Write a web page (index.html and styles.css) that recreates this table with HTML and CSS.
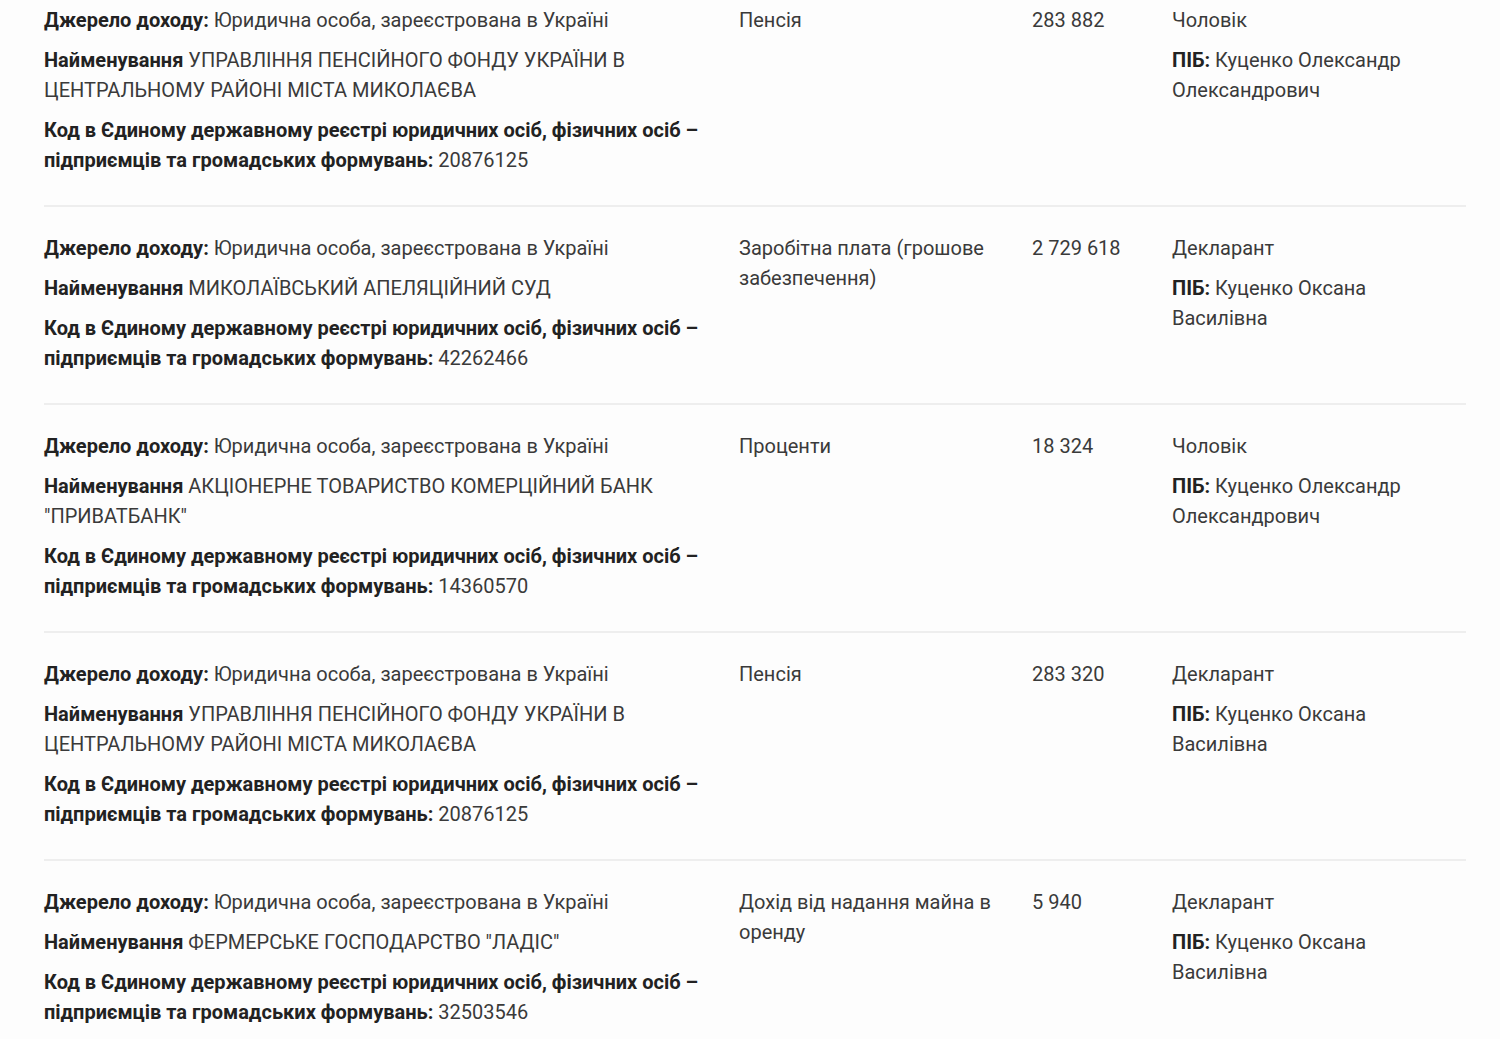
FILE: index.html
```html
<!DOCTYPE html>
<html lang="uk">
<head>
<meta charset="utf-8">
<link rel="stylesheet" href="styles.css">
</head>
<body>
<div class="list">
  <div class="row">
    <div class="cell c1">
      <p><b>Джерело доходу:</b> Юридична особа, зареєстрована в Україні</p>
      <p><b>Найменування</b> УПРАВЛІННЯ ПЕНСІЙНОГО ФОНДУ УКРАЇНИ В ЦЕНТРАЛЬНОМУ РАЙОНІ МІСТА МИКОЛАЄВА</p>
      <p><b>Код в Єдиному державному реєстрі юридичних осіб, фізичних осіб – підприємців та громадських формувань:</b> 20876125</p>
    </div>
    <div class="cell c2"><p>Пенсія</p></div>
    <div class="cell c3"><p>283 882</p></div>
    <div class="cell c4">
      <p>Чоловік</p>
      <p><b>ПІБ:</b> Куценко Олександр Олександрович</p>
    </div>
  </div>
  <div class="row">
    <div class="cell c1">
      <p><b>Джерело доходу:</b> Юридична особа, зареєстрована в Україні</p>
      <p><b>Найменування</b> МИКОЛАЇВСЬКИЙ АПЕЛЯЦІЙНИЙ СУД</p>
      <p><b>Код в Єдиному державному реєстрі юридичних осіб, фізичних осіб – підприємців та громадських формувань:</b> 42262466</p>
    </div>
    <div class="cell c2"><p>Заробітна плата (грошове забезпечення)</p></div>
    <div class="cell c3"><p>2 729 618</p></div>
    <div class="cell c4">
      <p>Декларант</p>
      <p><b>ПІБ:</b> Куценко Оксана Василівна</p>
    </div>
  </div>
  <div class="row">
    <div class="cell c1">
      <p><b>Джерело доходу:</b> Юридична особа, зареєстрована в Україні</p>
      <p><b>Найменування</b> АКЦІОНЕРНЕ ТОВАРИСТВО КОМЕРЦІЙНИЙ БАНК "ПРИВАТБАНК"</p>
      <p><b>Код в Єдиному державному реєстрі юридичних осіб, фізичних осіб – підприємців та громадських формувань:</b> 14360570</p>
    </div>
    <div class="cell c2"><p>Проценти</p></div>
    <div class="cell c3"><p>18 324</p></div>
    <div class="cell c4">
      <p>Чоловік</p>
      <p><b>ПІБ:</b> Куценко Олександр Олександрович</p>
    </div>
  </div>
  <div class="row">
    <div class="cell c1">
      <p><b>Джерело доходу:</b> Юридична особа, зареєстрована в Україні</p>
      <p><b>Найменування</b> УПРАВЛІННЯ ПЕНСІЙНОГО ФОНДУ УКРАЇНИ В ЦЕНТРАЛЬНОМУ РАЙОНІ МІСТА МИКОЛАЄВА</p>
      <p><b>Код в Єдиному державному реєстрі юридичних осіб, фізичних осіб – підприємців та громадських формувань:</b> 20876125</p>
    </div>
    <div class="cell c2"><p>Пенсія</p></div>
    <div class="cell c3"><p>283 320</p></div>
    <div class="cell c4">
      <p>Декларант</p>
      <p><b>ПІБ:</b> Куценко Оксана Василівна</p>
    </div>
  </div>
  <div class="row">
    <div class="cell c1">
      <p><b>Джерело доходу:</b> Юридична особа, зареєстрована в Україні</p>
      <p><b>Найменування</b> ФЕРМЕРСЬКЕ ГОСПОДАРСТВО "ЛАДІС"</p>
      <p><b>Код в Єдиному державному реєстрі юридичних осіб, фізичних осіб – підприємців та громадських формувань:</b> 32503546</p>
    </div>
    <div class="cell c2"><p>Дохід від надання майна в оренду</p></div>
    <div class="cell c3"><p>5 940</p></div>
    <div class="cell c4">
      <p>Декларант</p>
      <p><b>ПІБ:</b> Куценко Оксана Василівна</p>
    </div>
  </div>
</div>
</body>
</html>
```

FILE: styles.css
```css
html, body {
  margin: 0;
  padding: 0;
  background: #fdfdfd;
}
body {
  font-family: Roboto, "Noto Sans", sans-serif;
  font-size: 20px;
  line-height: 30px;
  color: #3a3a3a;
}
.list {
  width: 1422px;
  margin-left: 44px;
  margin-top: 5px;
}
.row {
  display: grid;
  grid-template-columns: 695px 293px 140px 294px;
  padding: 0 0 20px 0;
  border-bottom: 2px solid #eeeeee;
  margin-bottom: 26px;
}
.cell p {
  margin: 0 0 10px 0;
}
.cell b {
  font-weight: 700;
  color: #222;
}
.c1 { padding-right: 25px; }
.c2 { padding-right: 20px; }
.c3 { padding-right: 10px; }
.c4 { padding-right: 30px; }
```
